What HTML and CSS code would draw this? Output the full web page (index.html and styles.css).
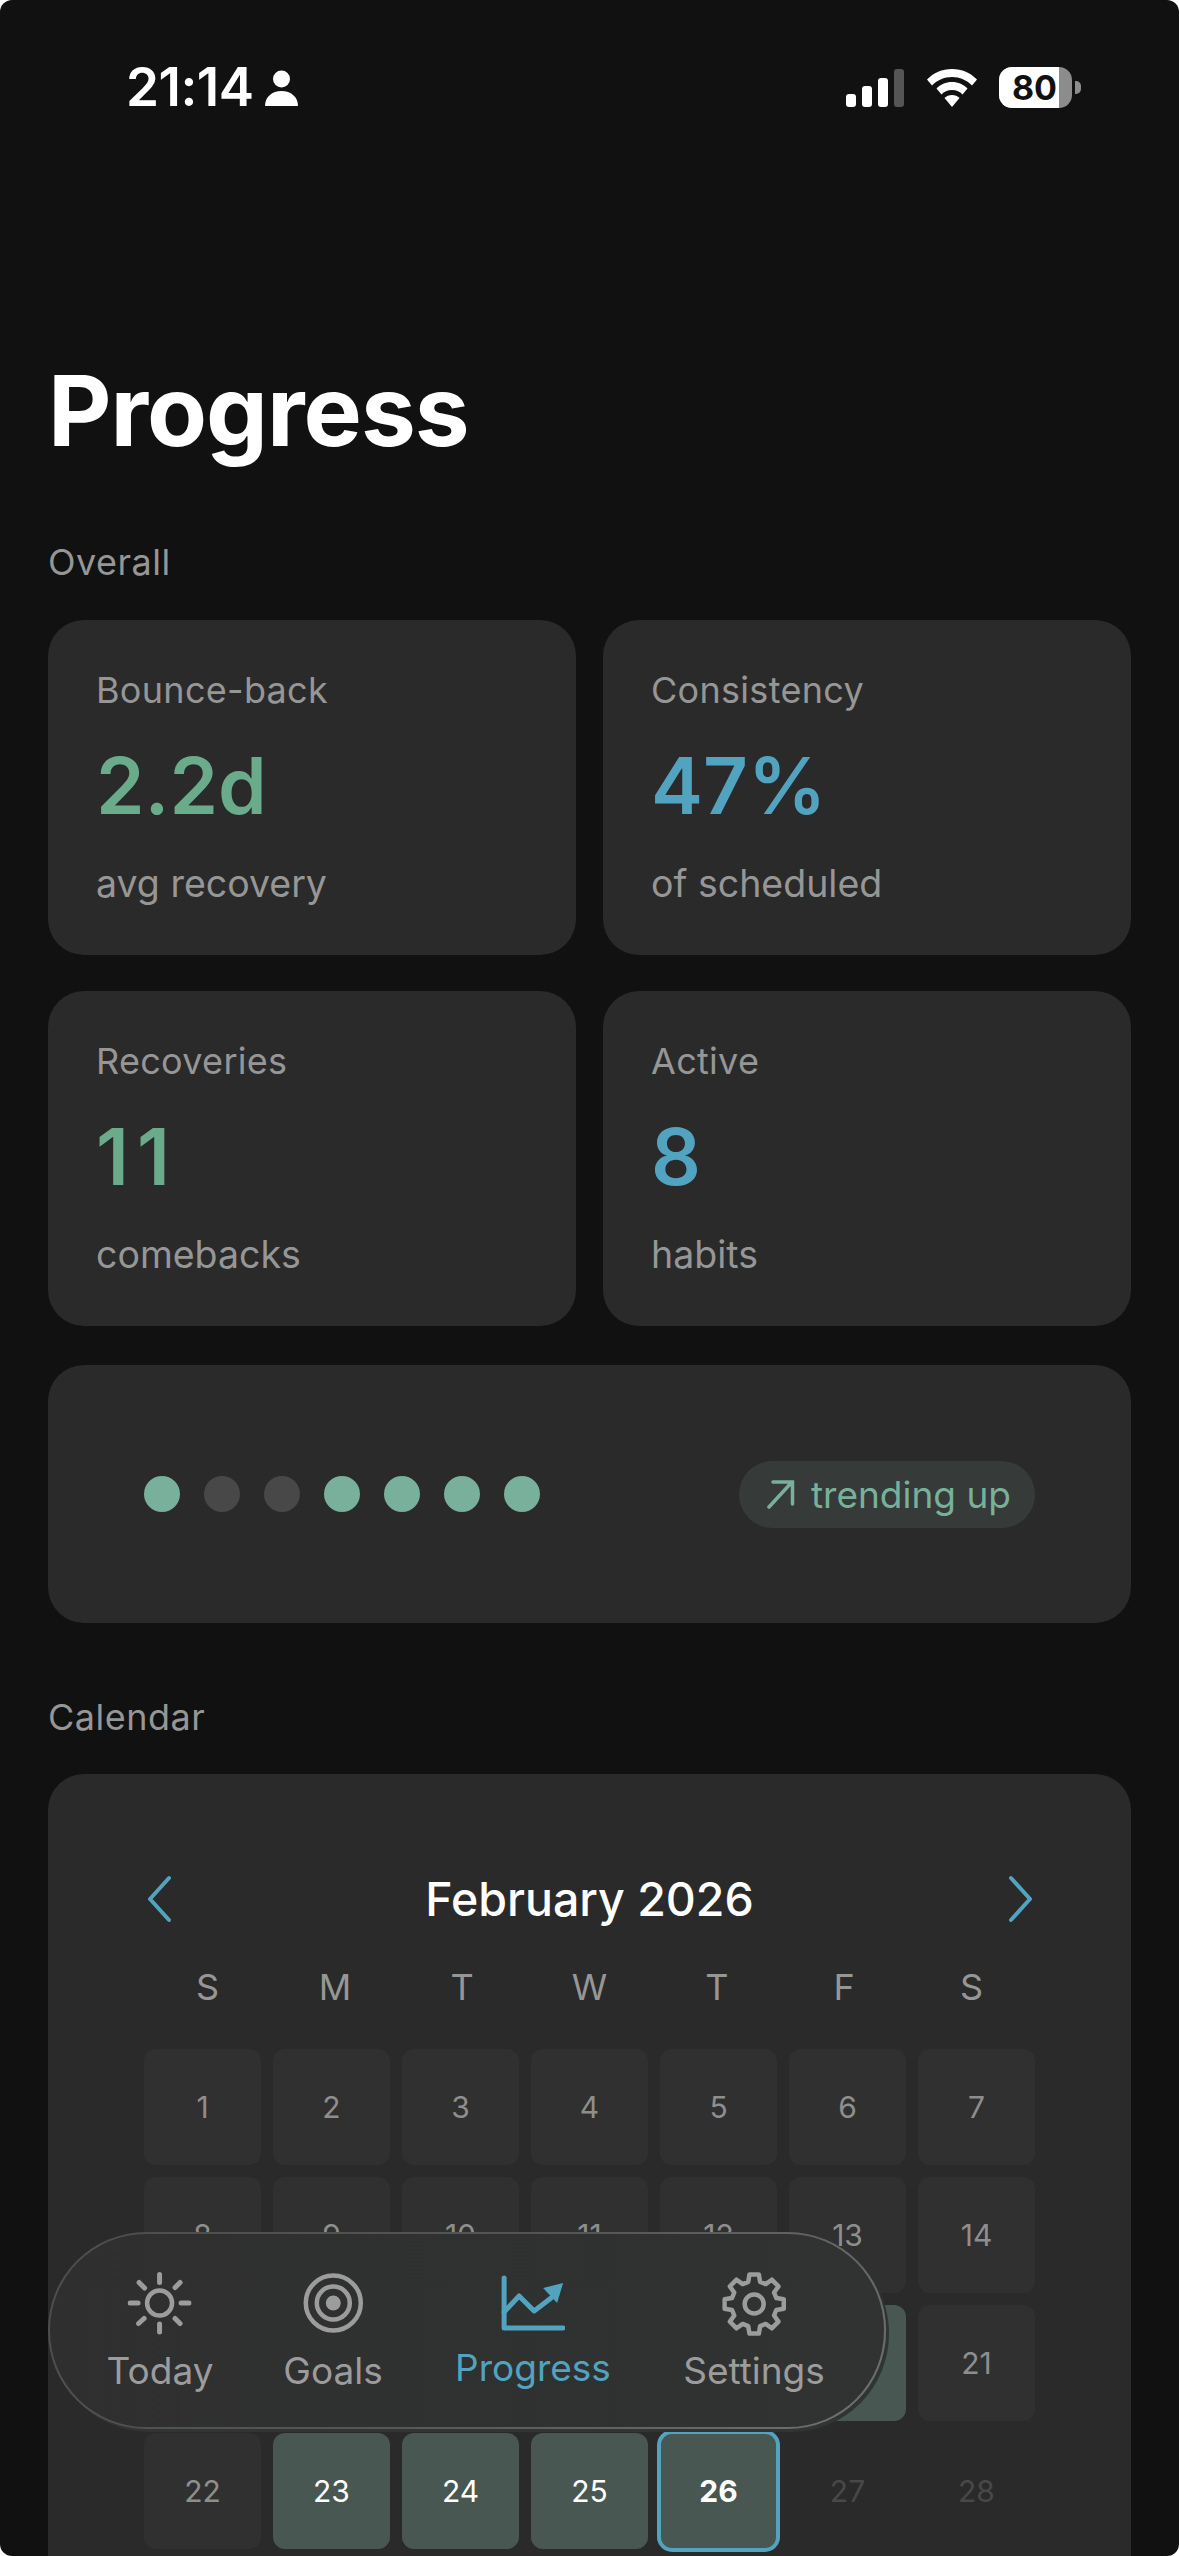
FILE: index.html
```html
<!DOCTYPE html>
<html lang="en">
<head>
<meta charset="utf-8">
<title>Progress</title>
<link rel="stylesheet" href="styles.css">
</head>
<body>
<div class="screen">
  <header class="status">
    <div class="status-left">
      <span class="time">21:14</span>
      <svg class="person" viewBox="0 0 33 36"><circle cx="16.5" cy="9" r="8.5"/><path d="M0 36c0-9 7-15 16.500-15S33 27 33 36z"/></svg>
    </div>
    <div class="status-right">
      <div class="signal"><i class="b1"></i><i class="b2"></i><i class="b3"></i><i class="b4"></i></div>
      <svg class="wifi" viewBox="0 0 50 38"><path d="M25 0c10 0 18.500 4 25 10.500l-5 6C39.500 11 33 8 25 8S10.500 11 5 16.500l-5-6C6.500 4 15 0 25 0z"/><path d="M25 13c6.500 0 11.500 2.500 15.500 6.500l-5 6C33 22.500 29.500 21 25 21s-8 1.500-10.500 4.500l-5-6C13.500 15.500 18.500 13 25 13z"/><path d="M25 26c3 0 5.500 1 7.500 3L25 38l-7.500-9c2-2 4.500-3 7.500-3z"/></svg>
      <div class="battery"><div class="battery-fill"><span class="battery-num">80</span></div></div>
      <i class="battery-nub"></i>
    </div>
  </header>

  <main class="content">
    <h1 class="title">Progress</h1>
    <h2 class="section">Overall</h2>
    <section class="stats">
      <article class="card stat"><p class="stat-label">Bounce-back</p><p class="stat-value green">2.2d</p><p class="stat-sub">avg recovery</p></article>
      <article class="card stat"><p class="stat-label">Consistency</p><p class="stat-value blue">47%</p><p class="stat-sub">of scheduled</p></article>
      <article class="card stat"><p class="stat-label">Recoveries</p><p class="stat-value green spaced">11</p><p class="stat-sub">comebacks</p></article>
      <article class="card stat"><p class="stat-label">Active</p><p class="stat-value blue">8</p><p class="stat-sub">habits</p></article>
    </section>
    <section class="card trend">
      <div class="dots"><i class="dot on"></i><i class="dot"></i><i class="dot"></i><i class="dot on"></i><i class="dot on"></i><i class="dot on"></i><i class="dot on"></i></div>
      <div class="pill">
        <svg class="pill-arrow" viewBox="0 0 28 30"><path d="M2 28L25 3M6 3h19.500v22"/></svg>
        <span>trending up</span>
      </div>
    </section>
    <h2 class="section section-cal">Calendar</h2>
    <section class="card calendar">
      <div class="cal-head">
        <svg class="chev" viewBox="0 0 24 50"><path d="M22 4L3 25l19 21"/></svg>
        <span class="month">February 2026</span>
        <svg class="chev" viewBox="0 0 24 50"><path d="M3 4l19 21L3 46"/></svg>
      </div>
      <div class="weekdays"><span>S</span><span>M</span><span>T</span><span>W</span><span>T</span><span>F</span><span>S</span></div>
      <div class="days">
        <span class="day">1</span><span class="day">2</span><span class="day">3</span><span class="day">4</span><span class="day">5</span><span class="day">6</span><span class="day">7</span>
        <span class="day">8</span><span class="day">9</span><span class="day">10</span><span class="day">11</span><span class="day">12</span><span class="day">13</span><span class="day">14</span>
        <span class="day">15</span><span class="day">16</span><span class="day">17</span><span class="day">18</span><span class="day">19</span><span class="day done">20</span><span class="day">21</span>
        <span class="day">22</span><span class="day done">23</span><span class="day done">24</span><span class="day done">25</span><span class="day done today">26</span><span class="day future">27</span><span class="day future">28</span>
      </div>
    </section>
  </main>

  <nav class="tabbar">
    <div class="tab tab-today">
      <svg class="tab-icon" viewBox="0 0 64 64"><circle class="thin" cx="32" cy="31" r="12.500"/><path d="M32 2.500v8M32 52v8M2.500 31h8M53.500 31h8M11.500 10.500l5.500 5.500M47.500 46.500l5 5M11 51.500l5.500-5M47.500 15.500l5-5"/></svg>
      <span>Today</span>
    </div>
    <div class="tab tab-goals">
      <svg class="tab-icon" viewBox="0 0 64 64"><circle class="thin" cx="32" cy="31" r="27.500"/><circle class="thin" cx="32" cy="31" r="16.500"/><circle class="solid" cx="32" cy="31" r="7.500"/></svg>
      <span>Goals</span>
    </div>
    <div class="tab tab-progress active">
      <svg class="tab-icon" viewBox="0 0 64 64"><path d="M3 6v50h59"/><path d="M3 40l15-16 15 15 17-13"/><path class="solid" d="M42 16l20-5-6 20z"/></svg>
      <span>Progress</span>
    </div>
    <div class="tab tab-settings">
      <svg class="tab-icon" viewBox="0 0 64 64"><path class="thin" d="M27.300 2.400h9.400l1.250 7.400 5.550 2.300 6.100-4.400 6.700 6.700-4.400 6.100 2.300 5.550 7.400 1.250v9.400l-7.400 1.250-2.300 5.550 4.400 6.100-6.700 6.700-6.100-4.400-5.550 2.300-1.250 7.400h-9.400l-1.250-7.400-5.550-2.300-6.100 4.400-6.700-6.700 4.400-6.100-2.300-5.550-7.400-1.250v-9.400l7.400-1.250 2.300-5.550-4.400-6.100 6.700-6.700 6.100 4.400 5.550-2.300z"/><circle class="thin" cx="32" cy="32" r="9.500"/></svg>
      <span>Settings</span>
    </div>
  </nav>
</div>
</body>
</html>
```
FILE: styles.css
```css
* { box-sizing: border-box; }
html, body { margin: 0; padding: 0; background: #fff; }
body { width: 1179px; height: 2556px; overflow: hidden; font-family: Inter, "Liberation Sans", sans-serif; }
p, h1, h2 { margin: 0; font-weight: 400; }
.screen { position: relative; width: 1179px; height: 2556px; background: #111; border-radius: 12px; overflow: hidden; }

.status { display: flex; justify-content: space-between; align-items: flex-start; height: 362px; padding: 62px 98px 0 126px; }
.status-left { display: flex; align-items: center; gap: 11px; color: #fff; }
.time { font-size: 53px; line-height: 50px; font-weight: 600; letter-spacing: -.5px; }
.person { width: 33px; height: 36px; fill: #fff; margin-top: 2px; }
.status-right { display: flex; align-items: center; margin-top: 5px; }
.signal { display: flex; align-items: flex-end; gap: 6px; height: 38px; margin-right: 23px; }
.signal i { width: 10px; background: #fff; border-radius: 3px; display: block; }
.signal .b1 { height: 13px; } .signal .b2 { height: 21px; } .signal .b3 { height: 29px; } .signal .b4 { height: 38px; background: #555; }
.wifi { width: 50px; height: 38px; fill: #fff; margin-right: 22px; }
.battery { width: 73px; height: 41px; background: #8c8c8c; border-radius: 13px; overflow: hidden; }
.battery-fill { width: 60px; height: 41px; background: #fff; display: flex; align-items: center; justify-content: flex-end; padding-right: 2px; }
.battery-num { color: #111; font-size: 34px; font-weight: 700; line-height: 41px; }
.battery-nub { width: 6px; height: 13px; background: #8c8c8c; border-radius: 0 5px 5px 0; margin-left: 3px; display: block; }

.content { padding: 0 48px; }
.title { font-size: 98px; line-height: 98px; font-weight: 700; color: #fff; letter-spacing: -1px; }
.section { font-size: 36px; line-height: 40px; color: #969696; margin-top: 82px; letter-spacing: .5px; }
.section-cal { margin-top: 74px; }
.card { background: #2a2a2a; border-radius: 36px; }
.stats { display: grid; grid-template-columns: 528px 528px; column-gap: 27px; row-gap: 36px; margin-top: 38px; }
.stat { height: 335px; padding: 50px 48px 0; }
.stat-label { font-size: 36px; line-height: 40px; color: #969696; letter-spacing: .3px; }
.stat-value { font-size: 78px; line-height: 94px; font-weight: 600; margin-top: 29px; }
.stat-value.spaced { letter-spacing: 8px; }
.stat-sub { font-size: 37.500px; line-height: 44px; color: #969696; margin-top: 29px; }
.green { color: #6aab8b; }
.blue { color: #52a3bf; }

.trend { height: 258px; margin-top: 39px; padding: 0 96px; display: flex; align-items: center; justify-content: space-between; }
.dots { display: flex; gap: 24px; }
.dot { width: 36px; height: 36px; border-radius: 50%; background: #484848; display: block; }
.dot.on { background: #78b09c; }
.pill { height: 67px; width: 296px; border-radius: 34px; background: #363b39; display: flex; align-items: center; padding-left: 28px; gap: 16px; color: #78b09c; font-size: 37px; }
.pill-arrow { width: 28px; height: 30px; fill: none; stroke: #78b09c; stroke-width: 3.500; stroke-linecap: round; }

.calendar { margin-top: 37px; height: 900px; padding: 100px 96px 0; }
.cal-head { display: flex; align-items: center; justify-content: space-between; height: 50px; padding: 0 3px; }
.chev { width: 24px; height: 50px; fill: none; stroke: #52a3bf; stroke-width: 4; stroke-linecap: round; stroke-linejoin: round; }
.month { font-size: 46.500px; color: #fff; font-weight: 500; }
.weekdays { display: grid; grid-template-columns: repeat(7, 127.300px); margin-top: 43px; height: 40px; line-height: 40px; font-size: 36px; color: #969696; text-align: center; }
.days { display: grid; grid-template-columns: repeat(7, 117px); column-gap: 12px; row-gap: 12px; margin-top: 42px; }
.day { height: 116px; border-radius: 12px; background: #303030; color: #8e8e8e; font-size: 30px; display: flex; align-items: center; justify-content: center; }
.day.done { background: #485751; color: #fff; }
.day.today { outline: 4px solid #52a3bf; outline-offset: -1px; font-weight: 700; }
.day.future { background: transparent; color: #484848; }

.tabbar { position: absolute; left: 48px; top: 2232px; width: 838px; height: 197px; border-radius: 98px; border: 2px solid transparent; background: linear-gradient(90deg, #2f2f2f, #303332) padding-box, linear-gradient(135deg, #4c4c4c, #555 50%, #707070) border-box; box-shadow: 3px 3px 0 0 #303532; }
.tab { position: absolute; top: 38px; display: flex; flex-direction: column; align-items: center; color: #9c9c9c; font-size: 37px; transform: translateX(-50%); }
.tab span { line-height: 44px; margin-top: 13px; }
.tab-today { left: 110px; }
.tab-goals { left: 283px; }
.tab-progress { left: 483px; }
.tab-progress span { margin-top: 10px; }
.tab-settings { left: 704px; }
.tab-icon { width: 64px; height: 64px; fill: none; stroke: #9c9c9c; stroke-width: 5; stroke-linecap: round; stroke-linejoin: round; }
.tab-icon .thin { stroke-width: 4.500; }
.tab-icon .solid { fill: #9c9c9c; stroke: none; }
.active { color: #52a3bf; }
.active .tab-icon { stroke: #52a3bf; }
.active .tab-icon .solid { fill: #52a3bf; }
```
